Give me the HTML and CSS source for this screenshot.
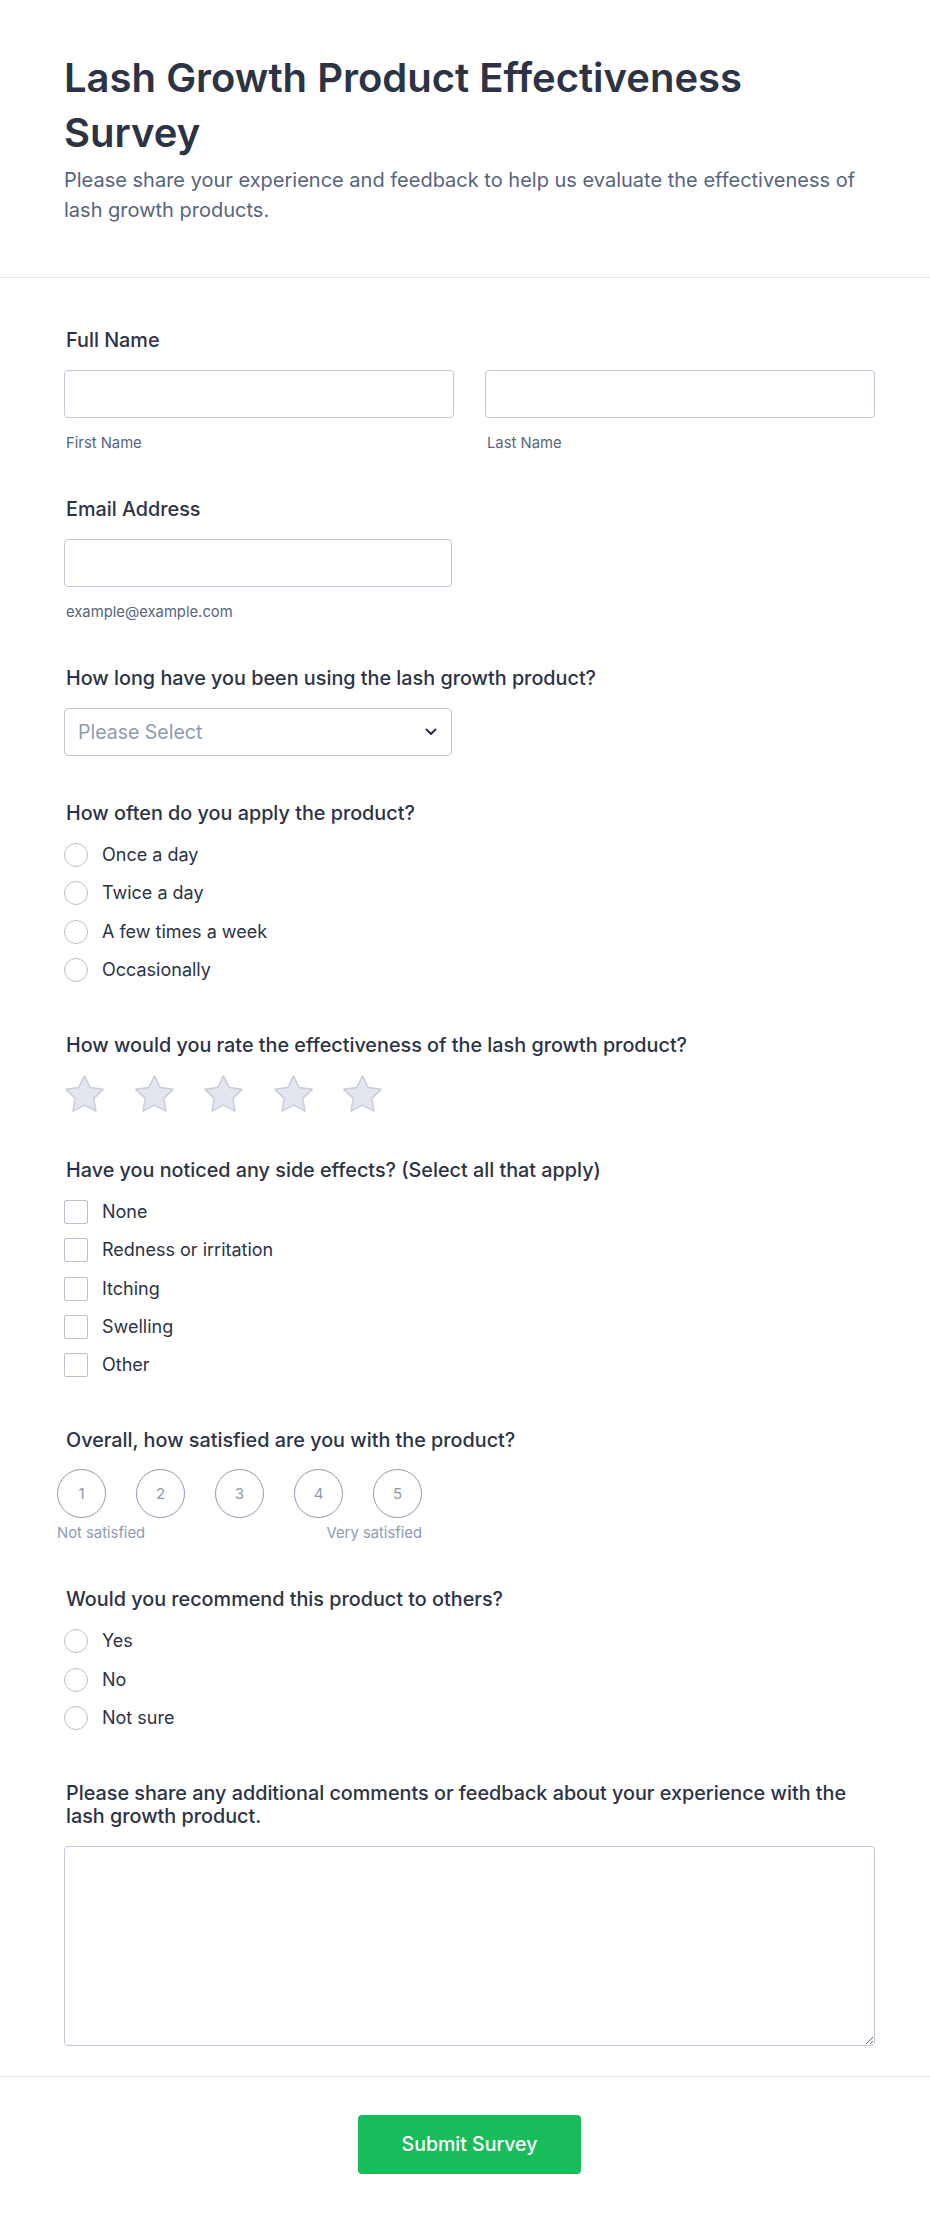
FILE: index.html
```html
<!DOCTYPE html>
<html lang="en">
<head>
<meta charset="utf-8">
<title>Lash Growth Product Effectiveness Survey</title>
<link rel="stylesheet" href="styles.css">
</head>
<body>
<div class="form">
  <header class="header">
    <h1 class="title">Lash Growth Product Effectiveness Survey</h1>
    <p class="subtitle">Please share your experience and feedback to help us evaluate the effectiveness of lash growth products.</p>
  </header>

  <main class="body">
    <section class="q">
      <div class="label">Full Name</div>
      <div class="name-row">
        <div class="field">
          <input class="input" type="text">
          <div class="sub">First Name</div>
        </div>
        <div class="field">
          <input class="input" type="text">
          <div class="sub">Last Name</div>
        </div>
      </div>
    </section>

    <section class="q">
      <div class="label">Email Address</div>
      <div class="field half">
        <input class="input" type="email">
        <div class="sub">example@example.com</div>
      </div>
    </section>

    <section class="q">
      <div class="label">How long have you been using the lash growth product?</div>
      <div class="select half">
        <span class="placeholder">Please Select</span>
        <svg class="chev" width="12" height="8" viewBox="0 0 12 8"><path d="M1.5 1.5L6 6l4.5-4.5" fill="none" stroke="#2c3345" stroke-width="2" stroke-linecap="round" stroke-linejoin="round"/></svg>
      </div>
    </section>

    <section class="q">
      <div class="label">How often do you apply the product?</div>
      <div class="options">
        <div class="opt"><span class="radio"></span><span class="opt-text">Once a day</span></div>
        <div class="opt"><span class="radio"></span><span class="opt-text">Twice a day</span></div>
        <div class="opt"><span class="radio"></span><span class="opt-text">A few times a week</span></div>
        <div class="opt"><span class="radio"></span><span class="opt-text">Occasionally</span></div>
      </div>
    </section>

    <section class="q">
      <div class="label">How would you rate the effectiveness of the lash growth product?</div>
      <div class="stars">
        <svg class="star" viewBox="1 1 22 21"><path d="M12 2l3.09 6.26L22 9.27l-5 4.87 1.18 6.88L12 17.77l-6.18 3.25L7 14.14 2 9.27l6.91-1.01L12 2z"/></svg>
        <svg class="star" viewBox="1 1 22 21"><path d="M12 2l3.09 6.26L22 9.27l-5 4.87 1.18 6.88L12 17.77l-6.18 3.25L7 14.14 2 9.27l6.91-1.01L12 2z"/></svg>
        <svg class="star" viewBox="1 1 22 21"><path d="M12 2l3.09 6.26L22 9.27l-5 4.87 1.18 6.88L12 17.77l-6.18 3.25L7 14.14 2 9.27l6.91-1.01L12 2z"/></svg>
        <svg class="star" viewBox="1 1 22 21"><path d="M12 2l3.09 6.26L22 9.27l-5 4.87 1.18 6.88L12 17.77l-6.18 3.25L7 14.14 2 9.27l6.91-1.01L12 2z"/></svg>
        <svg class="star" viewBox="1 1 22 21"><path d="M12 2l3.09 6.26L22 9.27l-5 4.87 1.18 6.88L12 17.77l-6.18 3.25L7 14.14 2 9.27l6.91-1.01L12 2z"/></svg>
      </div>
    </section>

    <section class="q">
      <div class="label">Have you noticed any side effects? (Select all that apply)</div>
      <div class="options">
        <div class="opt"><span class="check"></span><span class="opt-text">None</span></div>
        <div class="opt"><span class="check"></span><span class="opt-text">Redness or irritation</span></div>
        <div class="opt"><span class="check"></span><span class="opt-text">Itching</span></div>
        <div class="opt"><span class="check"></span><span class="opt-text">Swelling</span></div>
        <div class="opt"><span class="check"></span><span class="opt-text">Other</span></div>
      </div>
    </section>

    <section class="q">
      <div class="label">Overall, how satisfied are you with the product?</div>
      <div class="scale">
        <div class="scale-row">
          <span class="num">1</span>
          <span class="num">2</span>
          <span class="num">3</span>
          <span class="num">4</span>
          <span class="num">5</span>
        </div>
        <div class="scale-caps">
          <span>Not satisfied</span>
          <span>Very satisfied</span>
        </div>
      </div>
    </section>

    <section class="q">
      <div class="label">Would you recommend this product to others?</div>
      <div class="options">
        <div class="opt"><span class="radio"></span><span class="opt-text">Yes</span></div>
        <div class="opt"><span class="radio"></span><span class="opt-text">No</span></div>
        <div class="opt"><span class="radio"></span><span class="opt-text">Not sure</span></div>
      </div>
    </section>

    <section class="q last">
      <div class="label">Please share any additional comments or feedback about your experience with the lash growth product.</div>
      <textarea class="textarea"></textarea>
    </section>
  </main>

  <footer class="footer">
    <button class="submit" type="button">Submit Survey</button>
  </footer>
</div>
</body>
</html>
```

FILE: styles.css
```css
* { box-sizing: border-box; }

html, body {
  margin: 0;
  padding: 0;
  background: #ffffff;
}

body {
  font-family: Inter, "Noto Sans", sans-serif;
  color: #2c3345;
}

.form {
  width: 930px;
}

.header {
  padding: 50px 55px 52px 64px;
  border-bottom: 1px solid #e3e5ee;
}

.title {
  margin: 0;
  font-size: 40px;
  line-height: 55px;
  font-weight: 600;
  color: #2c3345;
}

.subtitle {
  margin: 5px 0 0;
  font-size: 20px;
  line-height: 30px;
  color: #57647e;
}

.body {
  padding: 50px 55px 30px 64px;
}

.q {
  margin-bottom: 45px;
}

.q.last {
  margin-bottom: 0;
}

.label {
  font-size: 19.8px;
  line-height: 23px;
  font-weight: 500;
  padding: 1px 0 0 2px;
  margin-bottom: 18px;
  color: #2c3345;
}

.name-row {
  display: flex;
  gap: 31px;
}

.field {
  flex: 1;
}

.half {
  width: 388px;
}

.input {
  display: block;
  width: 100%;
  height: 48px;
  border: 1px solid #c0c7d6;
  border-radius: 4px;
  background: #fff;
  font-family: inherit;
  font-size: 16px;
  padding: 0 14px;
  outline: none;
}

.sub {
  margin-top: 16px;
  padding-left: 2px;
  font-size: 14.8px;
  line-height: 18px;
  color: #57647e;
}

.select {
  height: 48px;
  border: 1px solid #c0c7d6;
  border-radius: 4px;
  display: flex;
  align-items: center;
  justify-content: space-between;
  padding: 0 14px 0 13px;
}

.placeholder {
  font-size: 19.5px;
  color: #8d9bb4;
}

.chev {
  display: block;
}

.options {
  display: flex;
  flex-direction: column;
  gap: 14.33px;
  margin-top: 1px;
  padding-bottom: 6px;
}

.opt {
  display: flex;
  align-items: center;
  height: 24px;
}

.radio,
.check {
  flex: none;
  width: 24px;
  height: 24px;
  border: 1px solid #b9c0cf;
  background: #fff;
}

.radio {
  border-radius: 50%;
}

.check {
  border-radius: 2px;
}

.opt-text {
  margin-left: 14px;
  font-size: 18px;
  line-height: 24px;
  color: #2c3345;
}

.stars {
  display: flex;
  gap: 28.5px;
  margin-top: -1px;
}

.star {
  width: 41px;
  height: 39px;
  display: block;
}

.star path {
  fill: #e3e5ef;
  stroke: #c9cddb;
  stroke-width: 0.8;
  stroke-linejoin: round;
}

.scale {
  width: 365px;
  margin-left: -7px;
  margin-top: -1px;
}

.scale-row {
  display: flex;
  justify-content: space-between;
}

.num {
  width: 49px;
  height: 49px;
  border: 1px solid #8f9bb3;
  border-radius: 50%;
  display: flex;
  align-items: center;
  justify-content: center;
  font-size: 15px;
  color: #8d9bb4;
}

.scale-caps {
  display: flex;
  justify-content: space-between;
  margin-top: 6px;
  font-size: 14.8px;
  line-height: 18px;
  color: #8d9bb4;
}

.textarea {
  display: block;
  width: 100%;
  height: 200px;
  margin-top: 1px;
  border: 1px solid #c0c7d6;
  border-radius: 4px;
  font-family: inherit;
  font-size: 16px;
  outline: none;
  resize: vertical;
}

.footer {
  border-top: 1px solid #e3e5ee;
  padding: 38px 55px 49px 64px;
  display: flex;
  justify-content: center;
}

.submit {
  width: 223px;
  height: 59px;
  border: none;
  border-radius: 4px;
  background: #18bd5b;
  color: #ffffff;
  font-family: inherit;
  font-size: 19.5px;
  font-weight: 500;
  cursor: pointer;
}
```
